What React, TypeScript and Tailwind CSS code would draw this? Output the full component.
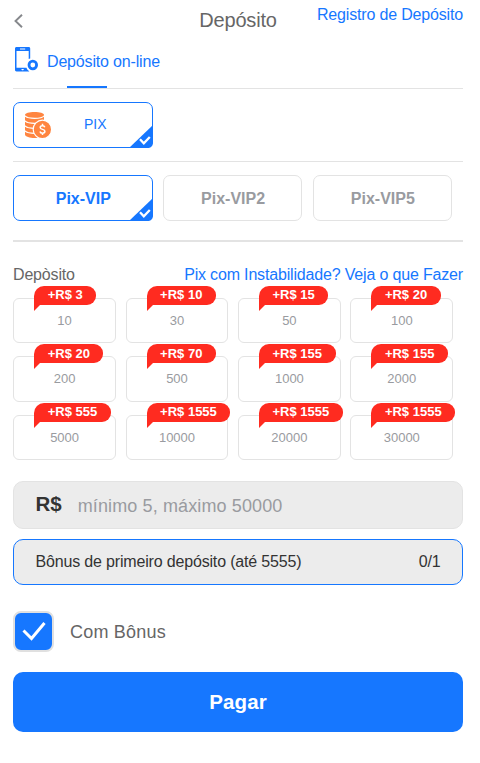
import React, { useState } from 'react';

interface Amount {
  value: number;
  bonus: number;
}

const CHANNELS = ['Pix-VIP', 'Pix-VIP2', 'Pix-VIP5'];

const AMOUNTS: Amount[] = [
  { value: 10, bonus: 3 },
  { value: 30, bonus: 10 },
  { value: 50, bonus: 15 },
  { value: 100, bonus: 20 },
  { value: 200, bonus: 20 },
  { value: 500, bonus: 70 },
  { value: 1000, bonus: 155 },
  { value: 2000, bonus: 155 },
  { value: 5000, bonus: 555 },
  { value: 10000, bonus: 1555 },
  { value: 20000, bonus: 1555 },
  { value: 30000, bonus: 1555 },
];

const PhoneIcon = () => (
  <svg width="23" height="25" viewBox="0 0 23 25" fill="none">
    <path
      fill="#1677ff"
      fillRule="evenodd"
      d="M1.500 0h12.200c.9 0 1.500.6 1.500 1.500V11.500c-.6.1-1 .3-1.500.6V4H1.500v16.800h10c.4 1.500 1.400 2.700 2.800 3.400-.2.200-.4.300-.8.300h-12C.6 24.500 0 24 0 23.100V1.500C0 .6.600 0 1.500 0zM5 1.400v1.200h5.200V1.400zM6.200 22l.8 1.200h1.200L9 22z"
    />
    <circle cx="17.800" cy="18" r="3.800" stroke="#1677ff" strokeWidth="2.800" />
  </svg>
);

const CoinsIcon = () => (
  <svg width="27" height="27" viewBox="0 0 27 27" fill="none">
    <path d="M0 3C0 1.200 4.200 0 9.500 0S19 1.200 19 3v20c-1 2-5 3-9.500 3S0 24.500 0 22.500z" fill="#ff8540" />
    <path
      d="M-.5 3.600c1.500 1.700 5.200 2.800 10 2.800s8.500-1.100 10-2.800M-.5 8.600c1.500 1.700 5.200 2.800 10 2.800s8.500-1.100 10-2.800M-.5 13.600c1.500 1.700 5.200 2.800 10 2.800M-.5 18.600c1.500 1.700 5.200 2.800 10 2.800"
      stroke="#fff"
      strokeWidth="1.100"
    />
    <circle cx="17.400" cy="17.400" r="9.200" fill="#ff8540" stroke="#fff" strokeWidth="1.200" />
    <path
      d="M19.800 15.300c-.3-1.100-1.200-1.600-2.300-1.600-1.300 0-2.300.6-2.300 1.700 0 2.600 4.700 1.300 4.700 3.900 0 1.200-1.100 1.900-2.400 1.900s-2.300-.6-2.500-1.700M17.500 11.800v2M17.500 21v2"
      stroke="#fff"
      strokeWidth="1.500"
    />
  </svg>
);

const CornerCheck = () => (
  <svg className="absolute right-[-1px] bottom-[-1px]" width="24" height="23" viewBox="0 0 24 23" fill="none">
    <path d="M24 0v17c0 4-2 6-6 6H0z" fill="#1677ff" />
    <path d="M11 14.300l3.800 4L20.800 12" stroke="#fff" strokeWidth="2.300" />
  </svg>
);

const BonusTag = ({ bonus }: { bonus: number }) => (
  <span className="absolute left-5 top-[-13px] flex h-[19px] items-center whitespace-nowrap rounded-tl-[10px] rounded-r-[9px] bg-[#ff2b20] pr-[13.500px] pl-[13.500px] pb-px text-[13px] font-bold tracking-normal text-white">
    +R$ {bonus}
    <svg className="absolute left-0 top-[18px]" width="6" height="7" viewBox="0 0 6 7">
      <path d="M0 0h6v1L0 7z" fill="#ff2b20" />
    </svg>
  </span>
);

export default function App() {
  const [channel, setChannel] = useState(CHANNELS[0]);
  const [amount, setAmount] = useState('');
  const [withBonus, setWithBonus] = useState(true);

  return (
    <div className="h-[763px] w-[480px] overflow-hidden bg-white pr-[17px] pl-[13px] font-['Liberation_Sans',Arial,sans-serif] text-[#666]">
      {/* Header */}
      <header className="grid h-10 grid-cols-[1fr_auto_1fr] items-center">
        <button className="mt-[2px] ml-[1px] w-fit">
          <svg width="9" height="14" viewBox="0 0 9 14" fill="none">
            <path d="M8 .7L1.500 7 8 13.300" stroke="#86888c" strokeWidth="1.900" />
          </svg>
        </button>
        <h1 className="text-[20px] tracking-[-0.2px]">Depósito</h1>
        <a className="mb-[10px] justify-self-end whitespace-nowrap text-[16px] tracking-[-0.17px] text-[#1677ff]">Registro de Depósito</a>
      </header>

      {/* Tabs */}
      <div className="flex h-[49px] items-start border-b border-[#e3e3e3]">
        <div className="relative flex h-12 items-center pb-[4px] pl-[2px] text-[16px] text-[#1677ff]">
          <span className="-mt-[5px]"><PhoneIcon /></span>
          <span className="ml-[9px] tracking-[-0.17px]">Depósito on-line</span>
          <span className="absolute bottom-0 left-[54px] h-[2px] w-10 bg-[#1677ff]" />
        </div>
      </div>

      <div className="border-b border-[#e3e3e3] pt-[13px] pb-[13px]">
        <button className="relative flex h-[46px] w-[140px] items-center rounded-[7px] border border-[#1677ff] text-[14px] text-[#1677ff]">
          <span className="ml-[11px]"><CoinsIcon /></span>
          <span className="-mt-[2px] ml-[32px]">PIX</span>
          <CornerCheck />
        </button>
      </div>

      <div className="flex gap-[10.200px] border-b-2 border-[#e3e3e3] pt-[13px] pb-[19px]">
        {CHANNELS.map((name) => (
          <button
            key={name}
            onClick={() => setChannel(name)}
            className={`relative h-[46px] w-[139.600px] rounded-[7px] border pt-px pl-[1px] text-[16px] font-bold ${
              name === channel ? 'border-[#1677ff] text-[#1677ff]' : 'border-[#e3e3e3] text-[#999ba0]'
            }`}
          >
            {name}
            {name === channel && <CornerCheck />}
          </button>
        ))}
      </div>

      {/* Amounts */}
      <div className="flex h-[55.800px] items-start justify-between pt-[21px] text-[16px] tracking-[-0.17px]">
        <span>Depòsito</span>
        <a className="text-[#1677ff]">Pix com Instabilidade? Veja o que Fazer</a>
      </div>
      <div className="ml-[0.200px] grid w-[440px] grid-cols-4 gap-x-[9.600px] gap-y-[13.100px]">
        {AMOUNTS.map(({ value, bonus }) => (
          <button
            key={value}
            onClick={() => setAmount(String(value))}
            className="relative h-[45.400px] rounded-[6px] border border-[#e3e3e3] text-[13px] text-[#999ba0]"
          >
            {value}
            <BonusTag bonus={bonus} />
          </button>
        ))}
      </div>

      <label className="mt-[20.600px] flex h-12 items-center rounded-[10px] border border-[#e3e3e3] bg-[#ececec] pl-[21.500px]">
        <span className="text-[20.500px] font-bold text-[#333]">R$</span>
        <input
          value={amount}
          onChange={(e) => setAmount(e.target.value)}
          placeholder="mínimo 5, máximo 50000"
          className="mt-[3px] ml-4 w-80 bg-transparent text-[18px] tracking-[0.12px] text-[#333] outline-none placeholder:text-[#999ba0]"
        />
      </label>

      <div className="mt-[10px] flex h-[46px] items-center justify-between rounded-[10px] border border-[#1677ff] bg-[#ececec] px-[21.500px] text-[16px] tracking-[-0.17px] text-[#333]">
        <span>Bônus de primeiro depósito (até 5555)</span>
        <span>0/1</span>
      </div>

      <div className="mt-[26px] flex items-center">
        <button
          onClick={() => setWithBonus(!withBonus)}
          className={`flex h-[41px] w-[41px] items-center justify-center rounded-[8px] border-2 border-[#e0e0e0] ${withBonus ? 'bg-[#1677ff]' : 'bg-white'}`}
        >
          {withBonus && (
            <svg width="24" height="20" viewBox="0 0 24 20" fill="none">
              <path d="M1.500 9.500l8 8L22.500 2" stroke="#fff" strokeWidth="3" />
            </svg>
          )}
        </button>
        <span className="mt-[2px] ml-4 text-[18px] tracking-[0.2px]">Com Bônus</span>
      </div>

      <button className="mt-5 h-[60px] w-full rounded-[10px] bg-[#1677ff] pt-px text-[20.500px] font-bold tracking-[0.1px] text-white">Pagar</button>
    </div>
  );
}
